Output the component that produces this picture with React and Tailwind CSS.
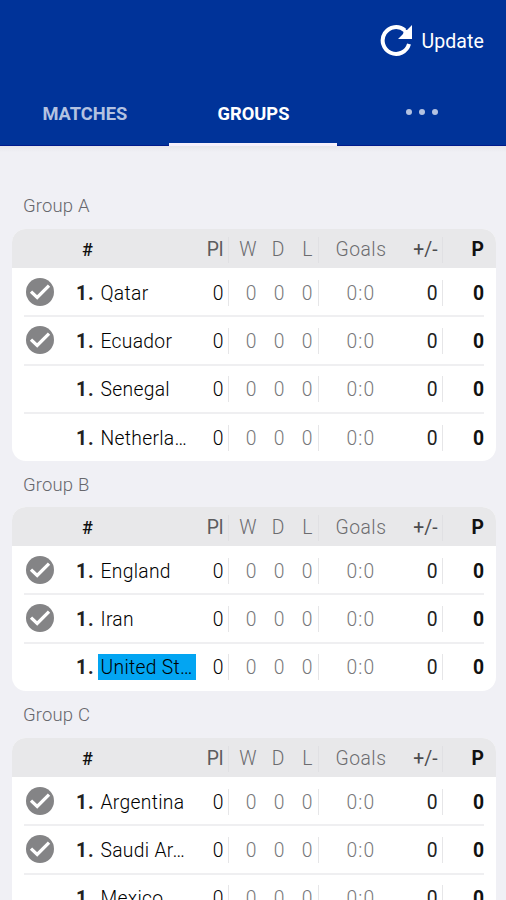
const groups = [
  { name: 'Group A', labelClass: 'h-[83px] pt-[49px]', teams: [['Qatar', true], ['Ecuador', true], ['Senegal', false], ['Netherla…', false]] },
  { name: 'Group B', labelClass: 'h-[46px] pt-[13px]', teams: [['England', true], ['Iran', true], ['United St…', false]] },
  { name: 'Group C', labelClass: 'h-[47px] pt-[13px]', teams: [['Argentina', true], ['Saudi Ar…', true], ['Mexico', false], ['Poland', false]] },
];

function CheckBadge() {
  return (
    <svg className="-mt-[2px] ml-[2px] size-7" viewBox="0 0 28 28" fill="none">
      <circle cx="14" cy="14" r="14" fill="#848486" />
      <path d="M5 13.6 L11.2 19.4 L23 7.6" stroke="#fff" strokeWidth="3.3" />
    </svg>
  );
}

function Divider({ header }) {
  return <div className={header ? 'w-px h-[26px] bg-[#e0e0e3]' : 'w-px h-[26px] bg-[#e6e6e8]'} />;
}

function Stats({ values, header }) {
  const [pl, w, d, l, goals, diff, points] = values;
  const shift = header ? 'pt-px' : 'pt-[3px]';
  return (
    <>
      <span className={`w-[28px] pr-[0.5px] text-right ${shift} ${header ? 'font-normal text-[#5c5c5e]' : 'text-[#000]'}`}>{pl}</span>
      <div className="w-1" />
      <Divider header={header} />
      <div className={`flex ${header ? 'text-[#6c6c6f]' : 'text-[#77777a]'} ${shift}`}>
        <span className="w-[28px] pr-[0.5px] text-right">{w}</span>
        <span className="w-7 pr-[0.5px] text-right">{d}</span>
        <span className="w-7 pr-[0.5px] text-right">{l}</span>
      </div>
      <div className="w-[5px]" />
      <Divider header={header} />
      <span className={`w-[84px] text-center ${shift} ${header ? 'tracking-[0.5px] text-[#6c6c6f]' : 'tracking-[1.2px] text-[#77777a]'}`}>{goals}</span>
      <span className={`w-[35px] pr-[0.5px] text-right font-normal ${shift} ${header ? 'text-[#4c4c4e]' : 'text-[#222]'}`}>{diff}</span>
      <div className="w-1" />
      <Divider header={header} />
      <span className={`w-[41px] text-right font-bold text-[#111] ${shift}`}>{points}</span>
    </>
  );
}

function Group({ group }) {
  return (
    <section>
      <h2 className={`pl-[23px] text-[18.5px] leading-[22px] font-light tracking-[0.15px] text-[#67676c] ${group.labelClass}`}>{group.name}</h2>
      <div className="ml-3 w-[484px] overflow-hidden rounded-[14px] bg-white text-[19.3px] font-light">
        <div className="flex h-[39px] items-center bg-[#e8e8ea] px-3 pt-[2px]">
          <span className="w-[172px] pl-[58px] text-[18px] font-medium text-[#111]">#</span>
          <Stats header values={['Pl', 'W', 'D', 'L', 'Goals', '+/-', 'P']} />
        </div>
        <div className="-mb-px pt-px">
          {group.teams.map(([team, checked], i) => (
            <div key={team} className="px-3">
              <div className={`flex h-[48.3px] items-center pt-px ${i < group.teams.length - 1 ? 'border-b-2 border-[#efeff1]' : 'pb-[2px]'}`}>
                <div className="w-[52px]">{checked && <CheckBadge />}</div>
                <span className="w-[22px] pt-[3px] font-bold tracking-[1px] text-[#222]">1.</span>
                <div className="w-[98px]">
                  <span className={`block h-[26px] w-[98px] pl-[2.5px] leading-[27px] tracking-[0.3px] whitespace-nowrap text-[#000] ${team === 'United St…' ? 'bg-[#03a5f2]' : ''}`}>{team}</span>
                </div>
                <Stats values={[0, 0, 0, 0, '0:0', 0, 0]} />
              </div>
            </div>
          ))}
        </div>
      </div>
    </section>
  );
}

export default function App() {
  return (
    <div className="flex h-[900px] w-[506px] flex-col overflow-hidden bg-[#f0f0f5] font-['Roboto',sans-serif]">
      <header className="h-[146px] shrink-0 border-b border-[#001a8c] bg-[#003399]">
        <div className="flex h-[80px] items-center justify-end pr-[22px]">
          <svg className="mr-[9px] size-8" viewBox="0 0 32 32" fill="none">
            <path d="M25 6.5 A13.4 13.4 0 1 0 29 20" stroke="#fff" strokeWidth="4" />
            <path d="M32 1 V15 H18 L23 10 L24 6 L27 6 Z" fill="#fff" />
          </svg>
          <span className="pt-[3px] text-[19.5px] tracking-[0.1px] text-white">Update</span>
        </div>
        <nav className="grid h-[67px] grid-cols-3 text-center text-[18.3px] font-bold">
          <div className="pt-[20px] pl-px leading-7 text-[#b3c2e1]">MATCHES</div>
          <div className="border-b-[4px] border-[#f5f0fc] pt-[20px] pl-px leading-7 text-white">GROUPS</div>
          <div className="flex justify-center gap-[7px] pt-[29px] pl-px">
            {[0, 1, 2].map((dot) => <span key={dot} className="size-[6px] rounded-full bg-[#b3c2e1]" />)}
          </div>
        </nav>
      </header>
      <main className="min-h-0 flex-1 overflow-hidden bg-linear-to-b from-[#e6e6eb] to-[#f0f0f5] to-[6px]">
        {groups.map((group) => <Group key={group.name} group={group} />)}
      </main>
    </div>
  );
}
